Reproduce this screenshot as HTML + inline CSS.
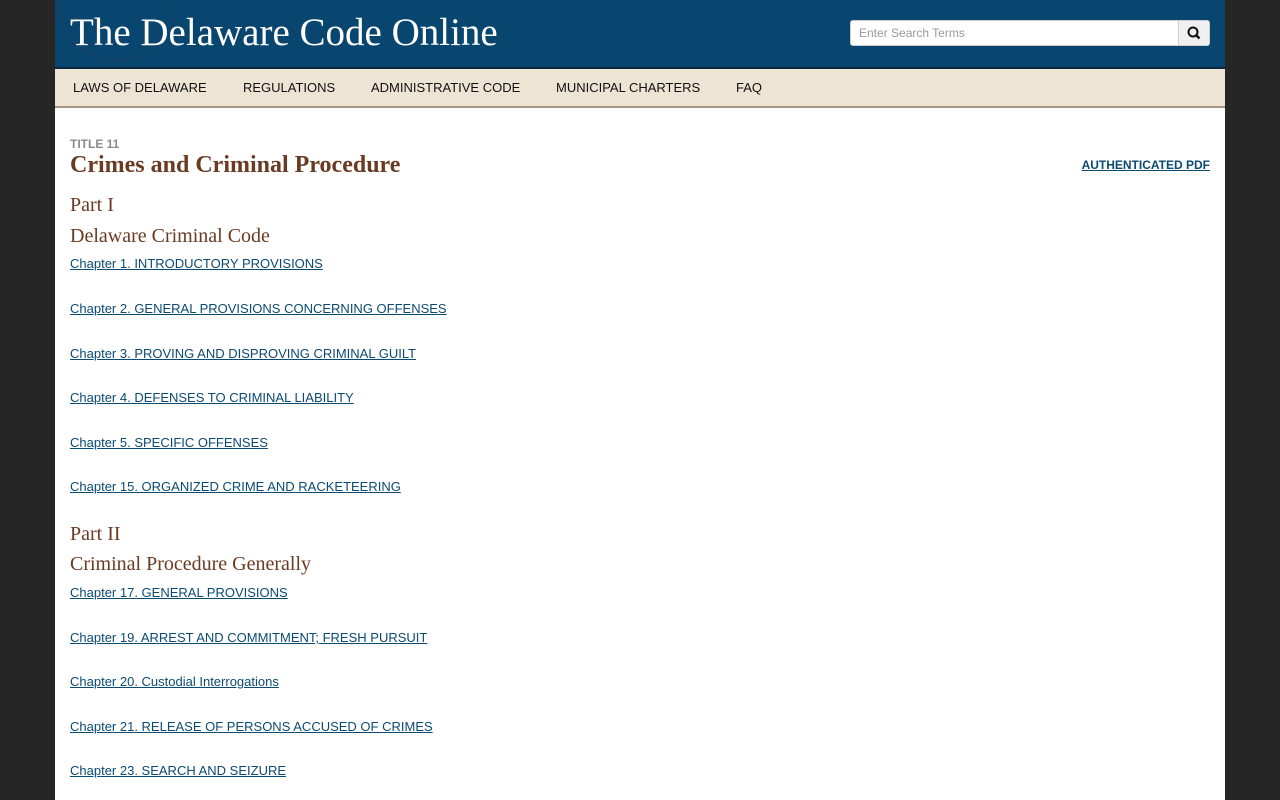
<!DOCTYPE html>
<html><head><meta charset="utf-8"><style>
*{margin:0;padding:0;box-sizing:border-box}
body{background:#262626;font-family:"Liberation Sans",Arial,sans-serif;width:1280px;height:800px;overflow:hidden}
.wrap{position:absolute;left:55px;top:0;width:1170px;height:800px;background:#fff}
.hdr{position:absolute;left:0;top:0;width:1170px;background:#08466f;border-bottom:2px solid #0a2a40;overflow:hidden;height:69px}
.seal{position:absolute;left:2px;top:-58px;width:120px;height:120px;border-radius:50%;border:3px solid #1a4266;opacity:.5}
.seal2{position:absolute;left:12px;top:-48px;width:100px;height:100px;border-radius:50%;border:2px solid #1a4266;opacity:.4}
.title{position:absolute;left:15px;top:10px;font-family:"Liberation Serif",serif;font-size:39px;color:#fff;white-space:nowrap}
.search{position:absolute;left:795px;top:20px;width:360px;height:26px;background:#fff;border:1px solid #ccc;border-radius:3px}
.search span{position:absolute;left:8px;top:5px;font-size:12px;color:#999}
.sbtn{position:absolute;right:0;top:0;width:31px;height:24px;background:#f0f0f0;border-left:1px solid #ccc;border-radius:0 3px 3px 0}
.nav{position:absolute;left:0;top:69px;width:1170px;height:39px;background:#ede4d3;border-bottom:2px solid #a8957d}
.nav a{position:absolute;top:11px;font-size:13px;color:#111;text-decoration:none}
.t11{position:absolute;left:15px;top:137px;font-size:12px;font-weight:bold;color:#8a8a8a}
h1{position:absolute;left:15px;top:152px;font-family:"Liberation Serif",serif;font-size:24px;color:#6a3a22;font-weight:bold}
.pdf{position:absolute;right:15px;top:158px;font-size:12px;font-weight:bold;color:#0b4a73}
.h2{position:absolute;left:15px;font-family:"Liberation Serif",serif;font-size:20px;color:#6a3a22}
.ch{position:absolute;left:15px;font-size:13px;color:#0b4a73;text-decoration:underline}
</style></head><body>
<div class="wrap">
<div class="hdr"><div class="seal"></div><div class="seal2"></div><div class="title">The Delaware Code Online</div>
<div class="search"><span>Enter Search Terms</span><div class="sbtn"><svg width="31" height="24" viewBox="0 0 31 24"><circle cx="14" cy="11" r="4.5" fill="none" stroke="#111" stroke-width="2"/><line x1="17.2" y1="14.2" x2="20.5" y2="17.5" stroke="#111" stroke-width="2.5"/></svg></div></div></div>
<div class="nav"><a style="left:18px">LAWS OF DELAWARE</a><a style="left:188px">REGULATIONS</a><a style="left:316px">ADMINISTRATIVE CODE</a><a style="left:501px">MUNICIPAL CHARTERS</a><a style="left:681px">FAQ</a></div>
<div class="t11">TITLE 11</div>
<h1>Crimes and Criminal Procedure</h1>
<a class="pdf" style="text-decoration:underline">AUTHENTICATED PDF</a>
<div class="h2" style="top:194px">Part I</div>
<div class="h2" style="top:225px">Delaware Criminal Code</div>
<a class="ch" style="top:256px">Chapter 1. INTRODUCTORY PROVISIONS</a>
<a class="ch" style="top:301px">Chapter 2. GENERAL PROVISIONS CONCERNING OFFENSES</a>
<a class="ch" style="top:346px">Chapter 3. PROVING AND DISPROVING CRIMINAL GUILT</a>
<a class="ch" style="top:390px">Chapter 4. DEFENSES TO CRIMINAL LIABILITY</a>
<a class="ch" style="top:435px">Chapter 5. SPECIFIC OFFENSES</a>
<a class="ch" style="top:479px">Chapter 15. ORGANIZED CRIME AND RACKETEERING</a>
<div class="h2" style="top:523px">Part II</div>
<div class="h2" style="top:553px">Criminal Procedure Generally</div>
<a class="ch" style="top:585px">Chapter 17. GENERAL PROVISIONS</a>
<a class="ch" style="top:630px">Chapter 19. ARREST AND COMMITMENT; FRESH PURSUIT</a>
<a class="ch" style="top:674px">Chapter 20. Custodial Interrogations</a>
<a class="ch" style="top:719px">Chapter 21. RELEASE OF PERSONS ACCUSED OF CRIMES</a>
<a class="ch" style="top:763px">Chapter 23. SEARCH AND SEIZURE</a>
</div>
</body></html>
